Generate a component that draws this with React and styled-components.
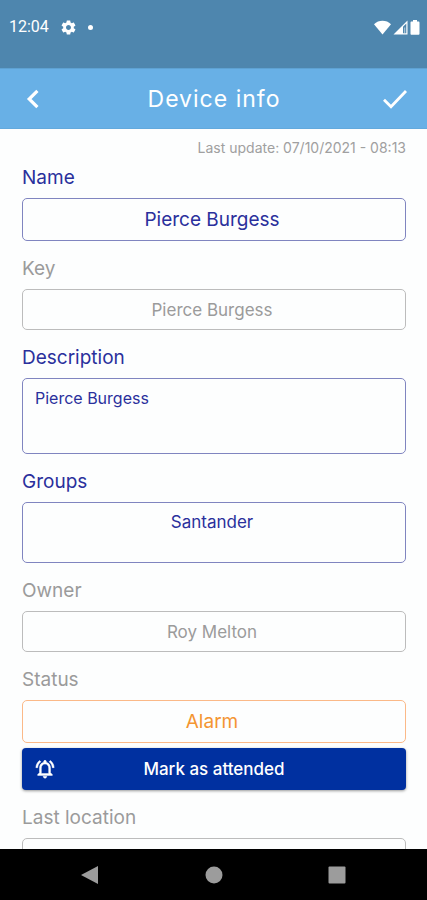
import React from 'react';
import styled, { createGlobalStyle, css } from 'styled-components';

const GlobalStyle = createGlobalStyle`
  *, *::before, *::after { box-sizing: border-box; }
  body { margin: 0; background: #fdfefe; }
  body, button, input, textarea { font-family: Inter, Roboto, sans-serif; }
`;

const tones = {
  active: { text: '#2a309c', border: '#8085c0' },
  muted: { text: '#9b9b9b', border: '#bcbcbc' },
  alarm: { text: '#f49532', border: '#fbb988' },
};

const Screen = styled.div`
  display: flex;
  flex-direction: column;
  height: 100vh;
  overflow: hidden;
`;

const StatusBar = styled.div`
  flex: none;
  display: flex;
  align-items: flex-start;
  justify-content: space-between;
  height: 68px;
  padding: 17px 7px 0 9px;
  background: #4e86ae;
  color: #fff;
`;

const StatusGroup = styled.div`
  display: flex;
  align-items: center;
  gap: ${({ $gap }) => $gap}px;
  height: 20px;
`;

const Clock = styled.span`
  font: 400 16px/20px Roboto, sans-serif;
`;

const Dot = styled.span`
  width: 5px;
  height: 5px;
  border-radius: 50%;
  background: #fff;
`;

const Header = styled.header`
  flex: none;
  display: flex;
  align-items: center;
  justify-content: space-between;
  height: 61px;
  padding: 0 17px 0 18px;
  background: #68b0e6;
  border-top: 1px solid #5ea2d3;
  border-bottom: 1px solid #62a9dd;
  color: #fff;
`;

const Title = styled.h1`
  margin: 0;
  font-size: 23px;
  line-height: 28px;
  font-weight: 400;
  letter-spacing: 1px;
`;

const IconButton = styled.button`
  display: flex;
  align-items: center;
  justify-content: center;
  width: 30px;
  height: 40px;
  padding: 0;
  border: 0;
  background: none;
  color: inherit;
  cursor: pointer;
`;

const Content = styled.main`
  flex: 1;
  min-height: 0;
  overflow: hidden;
  padding: 9px 21px 0 22px;
`;

const Updated = styled.p`
  margin: 0 0 8px;
  color: #a0a0a0;
  font-size: 14px;
  line-height: 20px;
  text-align: right;
`;

const Form = styled.form`
  display: flex;
  flex-direction: column;
  gap: 16px;
`;

const Field = styled.div`
  display: flex;
  flex-direction: column;
  gap: 8px;
`;

const Label = styled.label`
  color: ${({ $tone }) => tones[$tone].text};
  font-size: 19px;
  line-height: 24px;
`;

const sizes = { small: 16, medium: 17, large: 19 };

const control = css`
  display: block;
  width: 100%;
  height: ${({ $height }) => $height}px;
  margin: 0;
  border: 1px solid ${({ $tone }) => tones[$tone].border};
  border-radius: 5px;
  background: transparent;
  color: ${({ $tone }) => tones[$tone].text};
  font-size: ${({ $text }) => sizes[$text || 'medium']}px;
  line-height: 20px;
  text-align: ${({ $align }) => $align || 'center'};
  outline: none;
`;

const TextInput = styled.input`
  ${control}
  padding: 0 16px 0 12px;
`;

const TextArea = styled.textarea`
  ${control}
  padding: 9px 16px 9px 12px;
  resize: none;
  overflow: hidden;
`;

const StatusActions = styled.div`
  display: flex;
  flex-direction: column;
  gap: 5px;
`;

const AttendButton = styled.button`
  display: grid;
  grid-template-columns: 22px 1fr 22px;
  align-items: center;
  height: 42px;
  padding: 0 12px;
  border: 0;
  border-radius: 4px;
  background: #0030a0;
  box-shadow: 0 1px 3px rgba(0, 0, 0, 0.4);
  color: #fff;
  font-size: 17px;
  font-weight: 500;
  line-height: 20px;
  cursor: pointer;
`;

const NavBar = styled.nav`
  flex: none;
  display: flex;
  align-items: center;
  justify-content: space-between;
  height: 51px;
  padding: 0 75px;
  background: #000;
  color: #9c9c9c;
`;

function Gear() {
  return (
    <svg width="17" height="17" viewBox="0 0 24 24" fill="currentColor" aria-hidden="true">
      <path d="M19.43 12.98c.04-.32.07-.64.07-.98s-.03-.66-.07-.98l2.11-1.65c.19-.15.24-.42.12-.64l-2-3.46c-.12-.22-.39-.3-.61-.22l-2.49 1c-.52-.4-1.08-.73-1.69-.98l-.38-2.65C14.46 2.18 14.25 2 14 2h-4c-.25 0-.46.18-.49.42l-.38 2.65c-.61.25-1.17.59-1.69.98l-2.49-1c-.23-.09-.49 0-.61.22l-2 3.46c-.13.22-.07.49.12.64l2.11 1.65c-.04.32-.07.65-.07.98s.03.66.07.98l-2.11 1.65c-.19.15-.24.42-.12.64l2 3.46c.12.22.39.3.61.22l2.49-1c.52.4 1.08.73 1.69.98l.38 2.65c.03.24.24.42.49.42h4c.25 0 .46-.18.49-.42l.38-2.65c.61-.25 1.17-.59 1.69-.98l2.49 1c.23.09.49 0 .61-.22l2-3.46c.12-.22.07-.49-.12-.64l-2.11-1.65zM12 15.5c-1.93 0-3.5-1.57-3.5-3.5s1.57-3.5 3.5-3.5 3.5 1.57 3.5 3.5-1.57 3.5-3.5 3.5z" />
    </svg>
  );
}

function Wifi() {
  return (
    <svg width="17" height="15" viewBox="0 0 17 15" fill="currentColor" aria-hidden="true">
      <path d="M0 4.2C2.4 1.9 5.3.8 8.5.8s6.1 1.1 8.5 3.4L8.5 14.6z" />
    </svg>
  );
}

function Signal() {
  return (
    <svg width="15" height="15" viewBox="0 0 15 15" aria-hidden="true">
      <path d="M.5 14.5 14.5.5v14z" fill="currentColor" />
      <path d="M10 6.8 13.3 3.5v9.8H10z" fill="#4e86ae" />
      <path d="M11.2 7.4h1v5.9h-1z" fill="currentColor" opacity=".6" />
    </svg>
  );
}

function Battery() {
  return (
    <svg width="10" height="15" viewBox="0 0 10 15" fill="currentColor" aria-hidden="true">
      <path d="M3 0h4v1.6h1.4c.7 0 1.1.4 1.1 1.1v11c0 .6-.5 1-1.1 1H1.6c-.7 0-1.1-.4-1.1-1v-11c0-.7.4-1.1 1.1-1.1H3z" />
    </svg>
  );
}

function Chevron() {
  return (
    <svg width="14" height="20" viewBox="0 0 14 20" fill="none" stroke="currentColor" strokeWidth="3.2" aria-hidden="true">
      <path d="M11.4 1.8 3.2 10l8.2 8.2" />
    </svg>
  );
}

function Check() {
  return (
    <svg width="26" height="20" viewBox="0 0 26 20" fill="none" stroke="currentColor" strokeWidth="2.8" aria-hidden="true">
      <path d="m2 10.8 7 7L24 2" />
    </svg>
  );
}

function AlarmBell() {
  return (
    <svg width="22" height="22" viewBox="0 0 24 24" fill="currentColor" stroke="currentColor" strokeWidth="0.5" aria-hidden="true">
      <path d="M7.58 4.08 6.15 2.65C3.75 4.48 2.17 7.3 2.03 10.5h2c.15-2.65 1.51-4.97 3.55-6.42zM19.97 10.5h2c-.15-3.2-1.73-6.02-4.12-7.85l-1.42 1.43c2.02 1.45 3.39 3.77 3.54 6.42zM18 11c0-3.07-1.64-5.64-4.5-6.32V4c0-.83-.67-1.5-1.5-1.5s-1.5.67-1.5 1.5v.68C7.63 5.36 6 7.92 6 11v5l-2 2v1h16v-1l-2-2v-5zm-2 6H8v-6c0-2.48 1.51-4.5 4-4.5s4 2.02 4 4.5v6zm-4 5c.14 0 .27-.01.4-.04.65-.14 1.18-.58 1.44-1.18.1-.24.15-.5.15-.78h-4c.01 1.1.9 2 2.01 2z" />
    </svg>
  );
}

export default function App() {
  return (
    <>
      <GlobalStyle />
      <Screen>
        <StatusBar>
          <StatusGroup $gap={11}>
            <Clock>12:04</Clock>
            <Gear />
            <Dot />
          </StatusGroup>
          <StatusGroup $gap={2}>
            <Wifi />
            <Signal />
            <Battery />
          </StatusGroup>
        </StatusBar>

        <Header>
          <IconButton type="button" aria-label="Back"><Chevron /></IconButton>
          <Title>Device info</Title>
          <IconButton type="submit" form="device" aria-label="Save"><Check /></IconButton>
        </Header>

        <Content>
          <Updated>Last update: 07/10/2021 - 08:13</Updated>
          <Form id="device" onSubmit={(event) => event.preventDefault()}>
            <Field>
              <Label htmlFor="name" $tone="active">Name</Label>
              <TextInput id="name" $tone="active" $height={43} $text="large" defaultValue="Pierce Burgess" />
            </Field>
            <Field>
              <Label htmlFor="key" $tone="muted">Key</Label>
              <TextInput id="key" $tone="muted" $height={41} readOnly value="Pierce Burgess" />
            </Field>
            <Field>
              <Label htmlFor="description" $tone="active">Description</Label>
              <TextArea id="description" $tone="active" $height={76} $text="small" $align="left" spellCheck={false} defaultValue="Pierce Burgess" />
            </Field>
            <Field>
              <Label htmlFor="groups" $tone="active">Groups</Label>
              <TextArea id="groups" $tone="active" $height={61} spellCheck={false} defaultValue="Santander" />
            </Field>
            <Field>
              <Label htmlFor="owner" $tone="muted">Owner</Label>
              <TextInput id="owner" $tone="muted" $height={41} readOnly value="Roy Melton" />
            </Field>
            <Field>
              <Label htmlFor="status" $tone="muted">Status</Label>
              <StatusActions>
                <TextInput id="status" $tone="alarm" $height={43} $text="large" readOnly value="Alarm" />
                <AttendButton type="button">
                  <AlarmBell />
                  <span>Mark as attended</span>
                </AttendButton>
              </StatusActions>
            </Field>
            <Field>
              <Label htmlFor="location" $tone="muted">Last location</Label>
              <TextInput id="location" $tone="muted" $height={41} readOnly value="" />
            </Field>
          </Form>
        </Content>

        <NavBar>
          <IconButton type="button" aria-label="System back">
            <svg width="18" height="18" viewBox="0 0 18 18" fill="currentColor" aria-hidden="true"><path d="M17 0v18L0 9z" /></svg>
          </IconButton>
          <IconButton type="button" aria-label="Home">
            <svg width="18" height="18" viewBox="0 0 18 18" fill="currentColor" aria-hidden="true"><circle cx="9" cy="9" r="8.5" /></svg>
          </IconButton>
          <IconButton type="button" aria-label="Recent apps">
            <svg width="18" height="18" viewBox="0 0 18 18" fill="currentColor" aria-hidden="true"><rect x="0.5" y="0.5" width="17" height="17" rx="1" /></svg>
          </IconButton>
        </NavBar>
      </Screen>
    </>
  );
}
